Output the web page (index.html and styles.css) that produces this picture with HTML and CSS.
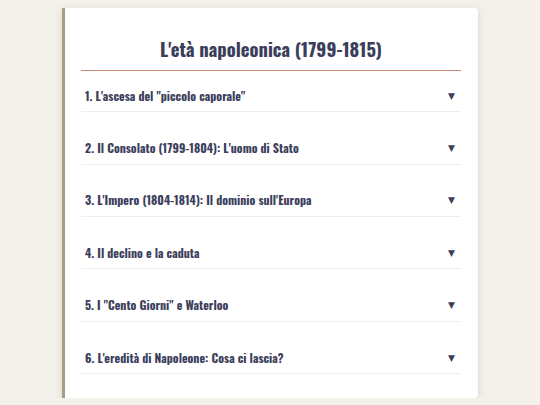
FILE: index.html
```html
<!DOCTYPE html>
<html lang="it">
<head>
<meta charset="utf-8">
<title>L'età napoleonica</title>
<link rel="stylesheet" href="styles.css">
</head>
<body>
<main class="card">
  <h1 class="title">L'età napoleonica (1799-1815)</h1>
  <ul class="list">
    <li class="item"><div class="head"><span>1. L'ascesa del "piccolo caporale"</span><span class="arrow">▼</span></div></li>
    <li class="item"><div class="head"><span>2. Il Consolato (1799-1804): L'uomo di Stato</span><span class="arrow">▼</span></div></li>
    <li class="item"><div class="head"><span>3. L'Impero (1804-1814): Il dominio sull'Europa</span><span class="arrow">▼</span></div></li>
    <li class="item"><div class="head"><span>4. Il declino e la caduta</span><span class="arrow">▼</span></div></li>
    <li class="item"><div class="head"><span>5. I "Cento Giorni" e Waterloo</span><span class="arrow">▼</span></div></li>
    <li class="item"><div class="head"><span>6. L'eredità di Napoleone: Cosa ci lascia?</span><span class="arrow">▼</span></div></li>
  </ul>
</main>
</body>
</html>
```
FILE: styles.css
```css
html, body {
  margin: 0;
  padding: 0;
}
body {
  background: #f4f1ea;
  font-family: "Oswald", "Liberation Sans", sans-serif;
  color: #3b3e5b;
  padding-top: 8px;
}
.card {
  width: 380px;
  margin: 0 auto;
  background: #ffffff;
  border-left: 3px solid #a99b84;
  border-radius: 0 4px 4px 0;
  box-shadow: 0 2px 8px rgba(0, 0, 0, 0.12);
  padding: 25px 17px 23px 16px;
  height: 342px;
}
.title {
  margin: 0 0 8px;
  font-size: 18.6px;
  font-weight: 700;
  line-height: 32.6px;
  text-align: center;
  padding-bottom: 4px;
  border-bottom: 1px solid #c98a74;
  color: #3b3e5b;
}
.list {
  list-style: none;
  margin: 0;
  padding: 0;
  display: flex;
  flex-direction: column;
  gap: 18.7px;
}
.item {
  border-bottom: 1px solid #eeeeee;
}
.head {
  display: flex;
  justify-content: space-between;
  align-items: center;
  padding: 7px 6px 5px 4px;
  font-size: 12px;
  font-weight: 700;
  line-height: 20.7px;
}
.arrow {
  font-family: "DejaVu Sans", sans-serif;
  font-size: 9px;
  color: #3b3e5b;
}
```
